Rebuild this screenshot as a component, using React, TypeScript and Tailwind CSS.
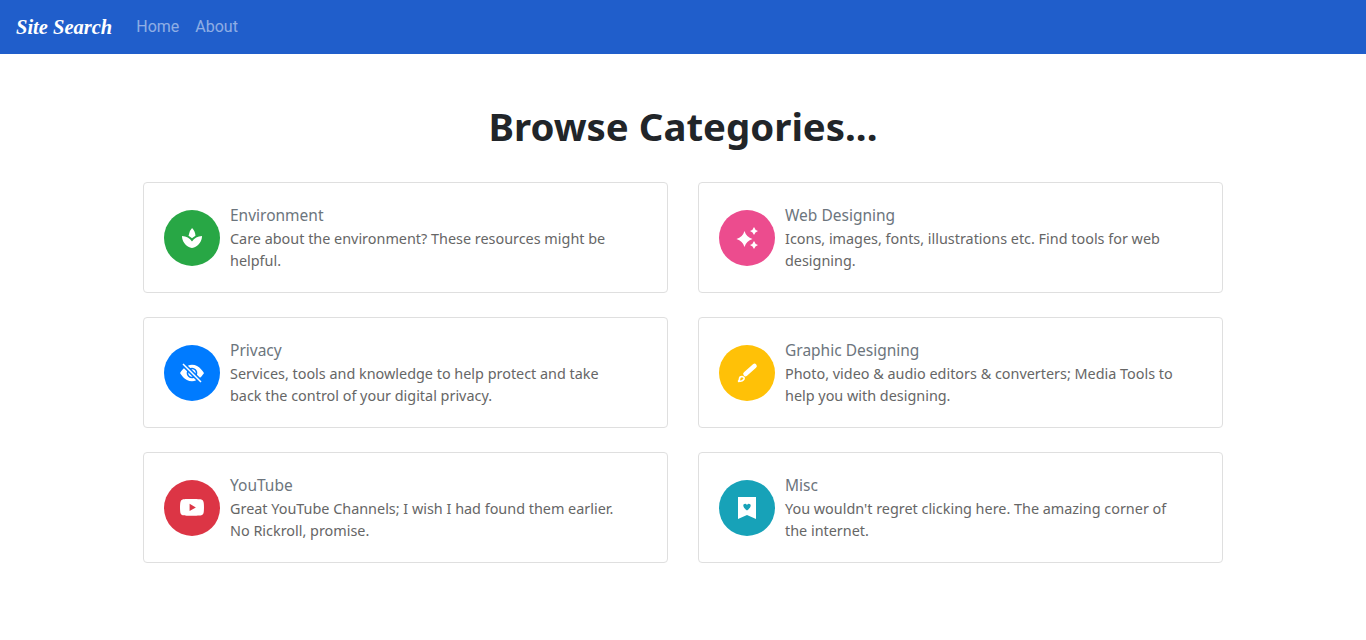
import type { ReactNode } from 'react'
import { MdSpa } from 'react-icons/md'
import { BsEyeSlashFill, BsYoutube } from 'react-icons/bs'

type Category = {
  title: string
  lines: [string, string]
  color: string
  icon: ReactNode
}

function SparklesIcon() {
  return (
    <svg width="24" height="24" viewBox="0 0 24 24" fill="currentColor">
      <path d="M9.5 5Q11.3 11.2 17.5 13Q11.3 14.8 9.5 21Q7.7 14.8 1.5 13Q7.7 11.2 9.5 5Z" />
      <path d="M19 1Q19.9 4.1 23 5Q19.9 5.9 19 9Q18.1 5.9 15 5Q18.1 4.1 19 1Z" />
      <path d="M19 15Q19.9 18.1 23 19Q19.9 19.9 19 23Q18.1 19.9 15 19Q18.1 18.1 19 15Z" />
    </svg>
  )
}

function BrushIcon() {
  return (
    <svg width="24" height="24" viewBox="0 0 24 24" fill="none" stroke="currentColor">
      <path d="M19.5 5L10.5 13" strokeWidth="4.6" strokeLinecap="round" />
      <path d="M3 20.5Q4.5 20 4.5 18Q4.5 15.5 7 15.5Q9.5 16 9 18Q8 20.5 3 20.5Z" strokeWidth="1.7" />
    </svg>
  )
}

function BookmarkIcon() {
  return (
    <svg width="24" height="24" viewBox="0 0 24 24" fill="currentColor">
      <path
        fillRule="evenodd"
        d="M3 1H21V23L12 19L3 23ZM12 14.5C9.5 12.6 8.3 11.3 8.3 9.6C8.3 7.6 10.9 7 12 8.9C13.1 7 15.7 7.6 15.7 9.6C15.7 11.3 14.5 12.6 12 14.5Z"
      />
    </svg>
  )
}

const categories: Category[] = [
  {
    title: 'Environment',
    lines: ['Care about the environment? These resources might be', 'helpful.'],
    color: 'bg-[#28a745]',
    icon: <MdSpa size={24} />,
  },
  {
    title: 'Web Designing',
    lines: ['Icons, images, fonts, illustrations etc. Find tools for web', 'designing.'],
    color: 'bg-[#ec4c8e]',
    icon: <SparklesIcon />,
  },
  {
    title: 'Privacy',
    lines: ['Services, tools and knowledge to help protect and take', 'back the control of your digital privacy.'],
    color: 'bg-[#007bff]',
    icon: <BsEyeSlashFill size={24} />,
  },
  {
    title: 'Graphic Designing',
    lines: ['Photo, video & audio editors & converters; Media Tools to', 'help you with designing.'],
    color: 'bg-[#ffc107]',
    icon: <BrushIcon />,
  },
  {
    title: 'YouTube',
    lines: ['Great YouTube Channels; I wish I had found them earlier.', 'No Rickroll, promise.'],
    color: 'bg-[#dc3545]',
    icon: <BsYoutube size={24} />,
  },
  {
    title: 'Misc',
    lines: ["You wouldn't regret clicking here. The amazing corner of", 'the internet.'],
    color: 'bg-[#17a2b8]',
    icon: <BookmarkIcon />,
  },
]

export default function App() {
  return (
    <div className="min-h-[640px] bg-white font-['Noto_Sans',sans-serif]">
      {/* Navbar */}
      <nav className="flex h-[54px] items-center bg-[#205ecb] px-4">
        <a className="mr-4 whitespace-nowrap font-['Liberation_Serif',serif] text-[20.5px] font-bold italic text-white">
          Site Search
        </a>
        <div className="ml-2 flex font-['Roboto',sans-serif] text-base text-white/50">
          <a className="mr-4">Home</a>
          <a>About</a>
        </div>
      </nav>

      <main className="mx-auto w-[1080px]">
        <h1 className="mt-[48px] mb-[32px] text-center text-[38.4px] leading-[48px] font-bold text-[#212529]">
          Browse Categories...
        </h1>

        {/* Category cards */}
        <div className="grid grid-cols-2 gap-x-[30px] gap-y-6">
          {categories.map((c) => (
            <a key={c.title} className="flex h-[111px] items-center rounded border border-[#dfdfdf] bg-white pl-5">
              <div className={`flex h-14 w-14 shrink-0 items-center justify-center rounded-full text-white ${c.color}`}>
                {c.icon}
              </div>
              <div className="ml-2.5">
                <h5 className="mb-px text-[15.5px] leading-6 text-[#6c757d]">{c.title}</h5>
                <p className="text-[14.4px] leading-[22px] whitespace-nowrap text-[#666666]">
                  {c.lines[0]}
                  <br />
                  {c.lines[1]}
                </p>
              </div>
            </a>
          ))}
        </div>
      </main>
    </div>
  )
}
